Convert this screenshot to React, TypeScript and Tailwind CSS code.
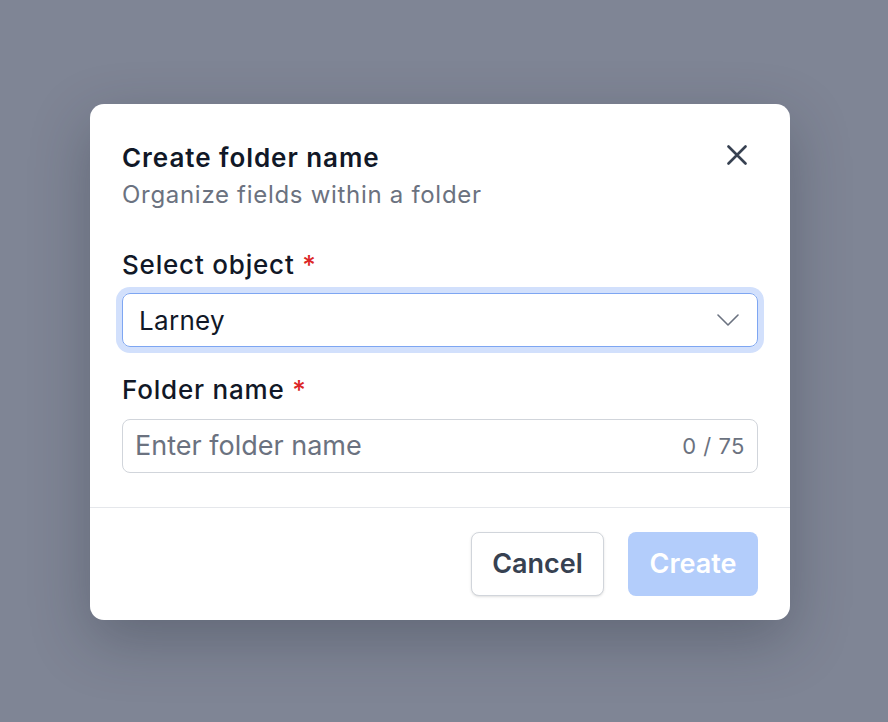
export default function App() {
  return (
    <div
      className="flex h-[722px] w-[888px] items-start bg-[#7f8595] pl-[90px] pt-[104px]"
      style={{ fontFamily: "Inter, 'Noto Sans', sans-serif" }}
    >
      <div className="w-[700px] rounded-[14px] bg-white shadow-[0_20px_60px_rgba(30,35,50,0.3)]">
        {/* Header */}
        <div className="flex items-start justify-between px-8 pt-[38px]">
          <div>
            <h2 className="text-[26px] font-semibold leading-[32px] tracking-[0.95px] text-[#111827]">
              Create folder name
            </h2>
            <p className="mt-[5px] text-[24px] leading-[32px] tracking-[0.7px] text-[#6b7280]">
              Organize fields within a folder
            </p>
          </div>
          <button className="mr-[11px] mt-[3px] text-[#374151]">
            <svg width="20" height="20" viewBox="0 0 20 20" fill="none">
              <path
                d="M1.5 1.5L18.5 18.5M18.5 1.5L1.5 18.5"
                stroke="currentColor"
                strokeWidth="2.6"
                strokeLinecap="round"
              />
            </svg>
          </button>
        </div>

        {/* Body */}
        <div className="flex flex-col px-8 pb-[34px] pt-[38px]">
          <label className="text-[26px] font-medium leading-[32px] tracking-[0.8px] text-[#111827]">
            Select object <span className="text-[#dc2626]">*</span>
          </label>
          <div className="mt-[12px] flex h-[54px] items-center justify-between rounded-[8px] border-[1.5px] border-[#7ea6f2] pl-[16px] pr-[18px] shadow-[0_0_0_6px_#d2e0fc]">
            <span className="text-[26px] tracking-[0.3px] text-[#111827]">Larney</span>
            <svg width="22" height="12" viewBox="0 0 22 12" fill="none" className="text-[#6b7280]">
              <path
                d="M1 1L11 11L21 1"
                stroke="currentColor"
                strokeWidth="1.6"
                strokeLinecap="round"
                strokeLinejoin="round"
              />
            </svg>
          </div>

          <label className="mt-[27px] text-[26px] font-medium leading-[32px] tracking-[0.8px] text-[#111827]">
            Folder name <span className="text-[#dc2626]">*</span>
          </label>
          <div className="mt-[13px] flex h-[54px] items-center justify-between rounded-[8px] border-[1.5px] border-[#d1d5db] pl-[12px] pr-[12px]">
            <input
              className="w-full bg-transparent text-[27px] text-[#111827] outline-none placeholder:text-[#6b7280]"
              placeholder="Enter folder name"
            />
            <span className="shrink-0 text-[22px] tracking-[0.5px] text-[#6b7280]">0 / 75</span>
          </div>
        </div>

        {/* Footer */}
        <div className="flex justify-end gap-6 border-t border-[#e5e7eb] px-8 pb-[24px] pt-[24px]">
          <button className="h-[64px] w-[133px] rounded-[8px] border-[1.5px] border-[#d1d5db] bg-white text-[27px] font-semibold text-[#374151] shadow-sm">
            Cancel
          </button>
          <button className="h-[64px] w-[130px] rounded-[8px] bg-[#b3cdfb] text-[27px] font-semibold text-white">
            Create
          </button>
        </div>
      </div>
    </div>
  );
}
